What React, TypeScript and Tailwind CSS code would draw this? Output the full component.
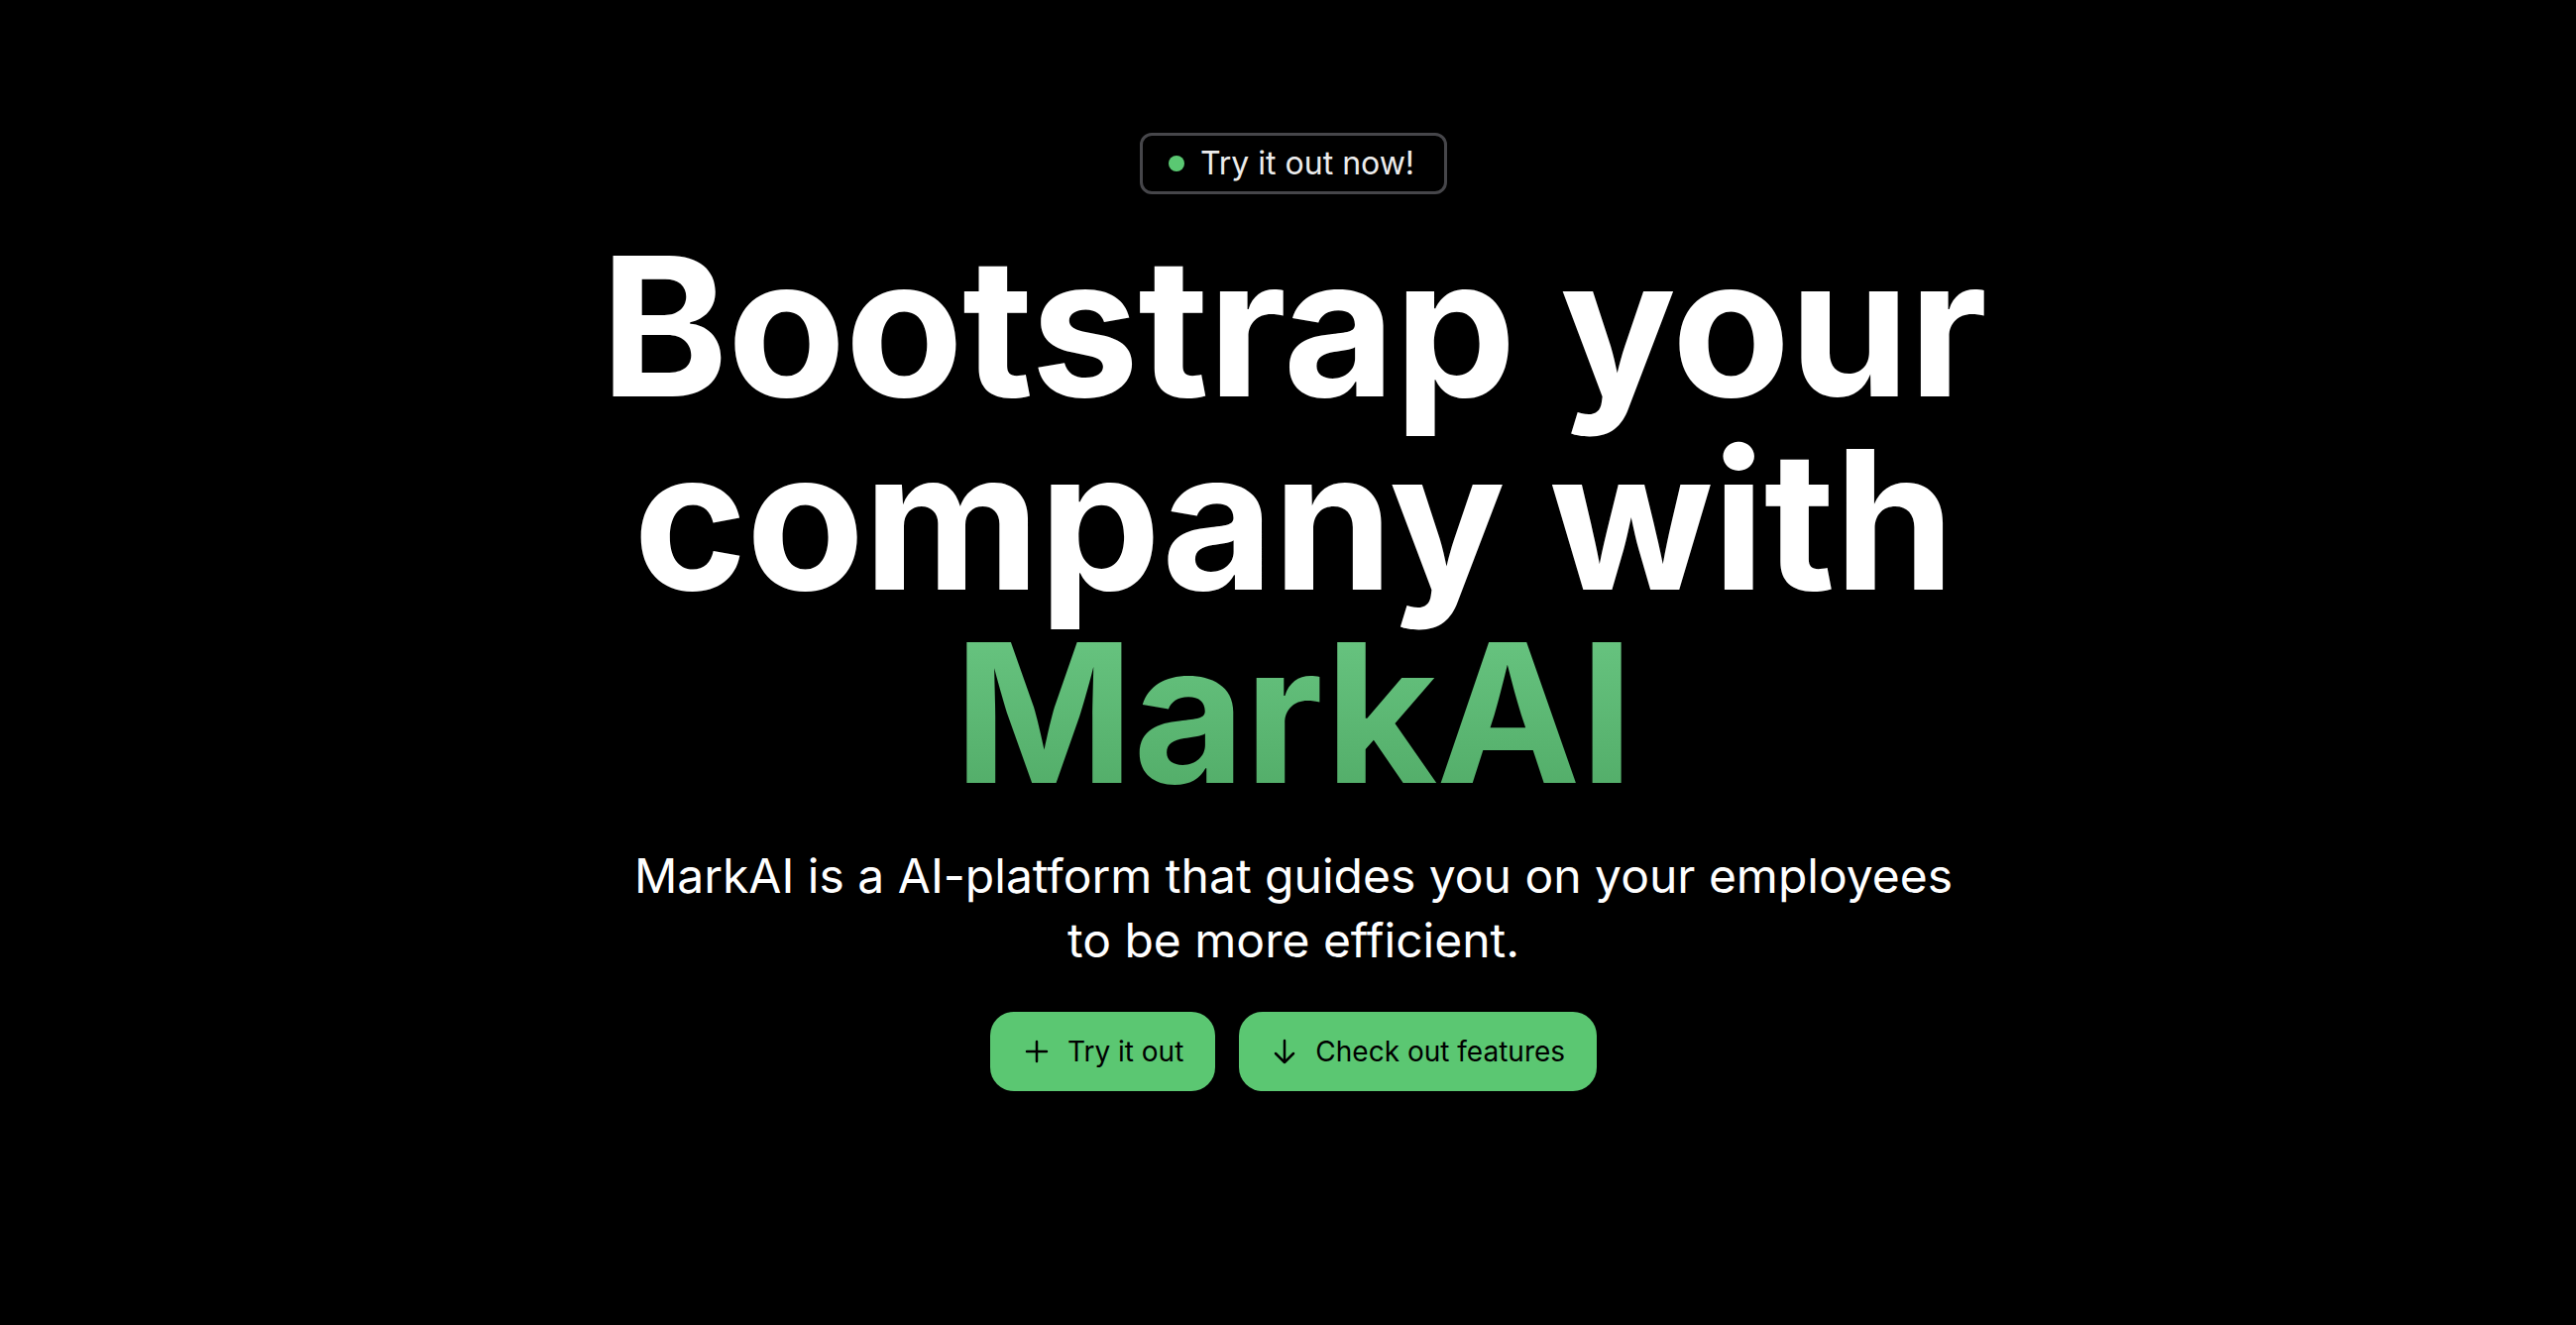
import React from "react";

export default function App() {
  return (
    <div
      className="min-h-screen w-full bg-black flex flex-col items-center pt-[134px] pl-[11px] text-white"
      style={{ fontFamily: "Inter, 'Noto Sans', sans-serif" }}
    >
      <div className="flex items-center gap-[16px] h-[62px] pl-[26px] pr-[30px] rounded-[12px] border-[3px] border-[#46464a]">
        <span className="w-[16px] h-[16px] rounded-full bg-[#5ac872]" />
        <span className="text-[32px] text-[#ececec] leading-none">Try it out now!</span>
      </div>

      <h1 className="mt-[36px] text-center font-bold text-[195px] leading-none tracking-[-0.005em]">
        Bootstrap your
        <br />
        company with
        <br />
        <span className="bg-gradient-to-b from-[#6cc985] to-[#4ea864] bg-clip-text text-transparent">
          MarkAI
        </span>
      </h1>

      <p className="mt-[34px] text-center text-[48px] leading-[65px] text-white">
        MarkAI is a AI-platform that guides you on your employees
        <br />
        to be more efficient.
      </p>

      <div className="mt-[40px] flex gap-[24px]">
        <button className="flex items-center gap-[19px] h-[80px] pl-[35px] pr-[32px] rounded-[24px] bg-[#5bc772] text-black text-[28px]">
          <svg width="24" height="24" viewBox="0 0 24 24" fill="none" stroke="currentColor" strokeWidth="2.5" strokeLinecap="round">
            <path d="M12 2v20M2 12h20" />
          </svg>
          Try it out
        </button>
        <button className="flex items-center gap-[20px] h-[80px] pl-[35px] pr-[32px] rounded-[24px] bg-[#5bc772] text-black text-[28px]">
          <svg width="22" height="26" viewBox="0 0 22 26" fill="none" stroke="currentColor" strokeWidth="2.5" strokeLinecap="round" strokeLinejoin="round">
            <path d="M11 2v22M2 15l9 9 9-9" />
          </svg>
          Check out features
        </button>
      </div>
    </div>
  );
}
